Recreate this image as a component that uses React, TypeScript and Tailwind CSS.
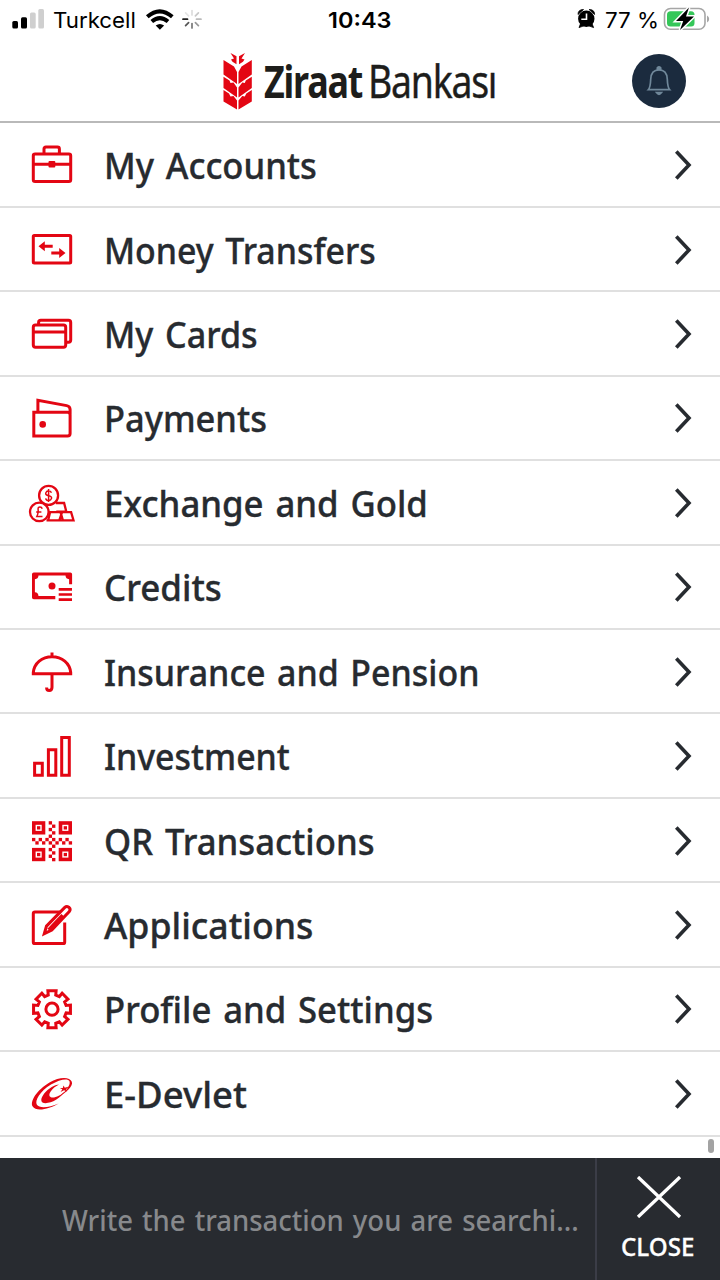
import { useLayoutEffect, useRef, useState, type ReactNode } from "react";

/** One line of text, condensed or widened to the given width. */
function FitText({ width, className, children }: { width: number; className?: string; children: string }) {
  const ref = useRef<HTMLSpanElement>(null);
  const [scale, setScale] = useState(1);
  useLayoutEffect(() => {
    if (ref.current) setScale(width / ref.current.offsetWidth);
  }, [width]);
  return (
    <span className="block shrink-0" style={{ width }}>
      <span
        ref={ref}
        className={"inline-block origin-left whitespace-nowrap " + (className ?? "")}
        style={{ transform: `scaleX(${scale})` }}
      >
        {children}
      </span>
    </span>
  );
}

const qrCells = [
  [5, 0], [6, 1], [5, 2], [6, 3], [5, 4],
  [0, 5], [1, 6], [2, 5], [3, 6], [4, 5], [5, 6], [6, 5], [7, 6], [8, 5], [9, 6], [10, 5], [11, 6],
  [6, 7], [5, 8], [6, 9], [5, 10], [6, 11],
];

const finders = [[4, 5.2], [30.7, 5.2], [4, 31.9], [30.7, 31.9]];

const gearPath = (() => {
  const pts: string[] = [];
  for (let i = 0; i < 8; i++) {
    const base = (i * Math.PI) / 4;
    const steps = [[-0.26, 14.6], [-0.22, 18.9], [0.22, 18.9], [0.26, 14.6]];
    for (const [da, r] of steps) {
      pts.push(`${(24 + r * Math.sin(base + da)).toFixed(2)} ${(25.2 - r * Math.cos(base + da)).toFixed(2)}`);
    }
  }
  return "M" + pts.join("L") + "Z";
})();

const items: { label: string; width: number; icon: ReactNode }[] = [
  {
    label: "My Accounts", width: 213,
    icon: (
      <>
        <rect x="5.3" y="14" width="37.4" height="27.5" rx="1.8" />
        <path d="M16 14V9q0-1.900 1.900-1.900h11.600q1.900 0 1.900 1.900v5M5.300 24.300h37.400" />
        <rect x="20.5" y="21" width="6.8" height="6.6" rx="1" fill="#e30613" stroke="none" />
      </>
    ),
  },
  {
    label: "Money Transfers", width: 272,
    icon: (
      <>
        <rect x="5.3" y="10.6" width="37.4" height="27.4" rx="1" />
        <path d="M15 21.300h9.700M23.300 28h9.700" />
        <path d="M10.500 21.300l6.300-5v10zM37.500 28l-6.300-5v10z" fill="#e30613" stroke="none" />
      </>
    ),
  },
  {
    label: "My Cards", width: 154,
    icon: (
      <>
        <rect x="5.3" y="16" width="32.4" height="22.3" rx="2.2" />
        <path d="M5.300 22.900h32.400M10.600 16v-2.600q0-2.200 2.200-2.200h27.700q2.200 0 2.200 2.200v17.700q0 2.200-2.200 2.200h-2.800" />
      </>
    ),
  },
  {
    label: "Payments", width: 163,
    icon: (
      <>
        <path d="M5.800 19.300h33.700q2.600 0 2.600 2.600v18.600q0 2.600-2.600 2.600H5.800zM9.900 19.300V7.200l28.800 5.400q3.400.7 3.400 4v5" />
        <circle cx="14.7" cy="31.4" r="3.3" fill="#e30613" stroke="none" />
      </>
    ),
  },
  {
    label: "Exchange and Gold", width: 324,
    icon: (
      <g strokeWidth="2.3">
        <path d="M27.800 25h8.300l2.200 8.600h-10M20.200 42.300l1.900-8.200h10.400l2.400 8.200H18.500M31.300 42.300l2.800-8.200h9l2.400 8.200H31" />
        <circle cx="20.6" cy="17.4" r="9.5" fill="white" />
        <circle cx="11.3" cy="33.9" r="9.3" fill="white" />
        <path d="M23.400 14.800q-.6-2-2.800-2t-2.800 2.100 2.800 2.800 2.900 2.700-2.900 2.200-2.900-2.200M20.600 11v13M14.200 30.800q-.5-1.800-2.200-1.800-2.100 0-1.900 2.300.4 4-1.300 7.200h5.700M8.200 34h5.200" strokeWidth="1.5" />
      </g>
    ),
  },
  {
    label: "Credits", width: 118,
    icon: (
      <>
        <path
          d="M5.800 10.500h36.500q1.800 0 1.800 1.800v10h-3V17.300q-3.400-.3-3.600-3.700H10.500q-.2 3.400-3.600 3.700v13q3.400.3 3.600 3.700h16.800v3.200H5.800Q4 37.200 4 35.400V12.300q0-1.800 1.800-1.800z"
          fill="#e30613" stroke="none"
        />
        <circle cx="24" cy="24" r="3.5" fill="#e30613" stroke="none" />
        <path d="M30.700 27.300H44M30.700 32.500H44M30.700 37.700H44" strokeWidth="2.7" />
      </>
    ),
  },
  {
    label: "Insurance and Pension", width: 375,
    icon: <path d="M5.300 26.700v-1.200C6.200 16 14 9.700 24 9.700s17.800 6.300 18.700 15.800v1.200zM24 5.400v4M24 26.700v13.500q0 3.300-2.800 3.300-2.600 0-2.600-3" />,
  },
  {
    label: "Investment", width: 186,
    icon: <path d="M6.600 32.300h7.700v12H6.600zM20.400 18.800h7.400v25.500h-7.400zM33.700 6.400h7.600v37.900h-7.600z" />,
  },
  {
    label: "QR Transactions", width: 271,
    icon: (
      <g fill="#e30613" stroke="none">
        {finders.map(([x, y]) => (
          <g key={`${x}-${y}`}>
            <rect x={x} y={y} width="13.3" height="13.3" />
            <rect x={x + 3.6} y={y + 3.6} width="6.1" height="6.1" fill="white" />
            <rect x={x + 5} y={y + 5} width="3.3" height="3.3" />
          </g>
        ))}
        {qrCells.map(([x, y], i) => (
          <rect key={i} x={4 + x * 3.34} y={5.2 + y * 3.34} width="3.34" height="3.34" />
        ))}
      </g>
    ),
  },
  {
    label: "Applications", width: 209,
    icon: (
      <>
        <path d="M33 12H7Q5.300 12 5.300 13.700v28.200q0 1.700 1.700 1.700h28q1.700 0 1.700-1.700V22.500" />
        <path d="M16.300 33.700l2.200-7.600L36.800 7.400q1.800-1.700 4-.2 2.300 2 .5 4.300L23.800 30zM20.500 29.700L34.500 15" />
      </>
    ),
  },
  {
    label: "Profile and Settings", width: 329,
    icon: (
      <>
        <path d={gearPath} />
        <circle cx="24" cy="25.2" r="6.1" />
      </>
    ),
  },
  {
    label: "E-Devlet", width: 143,
    icon: (
      <g fill="#e30613" stroke="none">
        <path d="M43.800 12.800C42 8 32 7.400 21.500 13.500 9 20.800 1.500 32.500 4.700 37.600c3.300 5.200 16.500 2.600 26-3.200-9.200 4.200-19.300 5.300-21.800 1.400C6.400 31.700 12.200 22 23 15.500 31.500 10.400 40 8.800 41.500 12.300c1.500 4.200-4.500 11-10.700 15.500 7.500-4.300 14.700-10.700 13-15z" />
        <path d="M31 15.500c-7 .2-17.500 9.500-17.700 15.700-.1 4.300 8.200 3.600 14.700-.4 4-2.500 7.200-5.600 8.300-8-3.400 3.600-10 6.800-13.400 5.500-4.400-2 1.200-9.500 8.100-12.800z" />
        <path d="M35.500 16.600l1.300 2.200 4.200-1.200-3 2.600 1.200 2.300-3.200-1.200-3.400 1.700 1.700-2.700-2.500-1.300h3z" />
      </g>
    ),
  },
];

function StatusBar() {
  return (
    <div className="flex h-10 items-center font-[Inter,sans-serif] text-[22px] leading-10 text-black">
      <svg className="ml-3 h-10 w-8" viewBox="12 0 32 40">
        <rect x="12.3" y="21" width="5.7" height="7.5" rx="1.5" />
        <rect x="21" y="17.3" width="6" height="11.2" rx="1.5" />
        <rect x="30" y="12.5" width="5.7" height="16" rx="1.5" fill="#cfcfcf" />
        <rect x="38.3" y="9" width="5.7" height="19.5" rx="1.5" fill="#cfcfcf" />
      </svg>
      <div className="ml-[9px] flex"><FitText width={83}>Turkcell</FitText></div>
      <svg className="ml-[9px] h-10 w-15" viewBox="145 0 60 40" fill="none">
        <g stroke="black" strokeWidth="4">
          <path d="M147.300 16.800q12.400-11 25 0" />
          <path d="M151.800 21.600q8-7 16.200 0" />
        </g>
        <path d="M155.700 25.500q4.200-3.200 8.400 0l-4.200 4.300z" fill="black" />
        <g strokeWidth="1.7" strokeLinecap="round">
          <path d="M192 10.500v4.500" stroke="#dddddd" />
          <path d="M198.400 12.800l-3 3" stroke="#c8c8c8" />
          <path d="M201 19.200h-4.500" stroke="#bbbbbb" />
          <path d="M198.400 25.600l-3-3" stroke="#999999" />
          <path d="M192 28v-4.500" stroke="#777777" />
          <path d="M185.600 25.600l3-3" stroke="#555555" />
          <path d="M183 19.200h4.500" stroke="#222222" />
          <path d="M185.600 12.800l3 3" stroke="#e5e5e5" />
        </g>
      </svg>
      <div className="ml-[123px] flex font-semibold"><FitText width={63}>10:43</FitText></div>
      <svg className="ml-[186px] h-10 w-5" viewBox="577 0 20 40">
        <circle cx="586.3" cy="18.8" r="8.2" />
        <path d="M578 14.500q0-5 5.500-5zM594.600 14.500q0-5-5.500-5zM579 27.600l2-5 3.500 3zM593.600 27.600l-2-5-3.500 3z" stroke="black" strokeWidth=".8" />
        <path d="M586.500 13.500v5.700h-5.200" fill="none" stroke="white" strokeWidth="1.6" />
      </svg>
      <div className="ml-2 flex"><FitText width={54}>77 %</FitText></div>
      <svg className="ml-[3px] h-10 w-12" viewBox="662 0 48 40">
        <rect x="664.5" y="8.5" width="40.5" height="20.8" rx="6" fill="none" stroke="#a6a6a6" strokeWidth="1.6" />
        <path d="M707 15.500q2.200 1 2.200 3.500t-2.200 3.500z" fill="#a6a6a6" />
        <rect x="667" y="11.2" width="27.5" height="15.4" rx="3.5" fill="#35c759" />
        <path d="M689 7.500L676 21h7.200l-3.200 9L694 16.500h-8z" stroke="white" strokeWidth="3" paintOrder="stroke" />
      </svg>
    </div>
  );
}

function Header() {
  return (
    <header className="flex h-[83px] items-start border-b-2 border-[#b9b9b9] pl-[223px] font-['Noto_Sans',sans-serif]">
      <svg className="mt-3 h-[58px] w-[30px] shrink-0" viewBox="0 0 30 58" fill="#e30613">
        <path d="M7.500 1l6 3.200v8L9.500 9.700 8 7.500l3-1zM22 1l-6 3.200v8l4-2.500 1.500-2.200-3-1z" />
        <path d="M.5 8l10.500 6.500L14 20v12L.5 22.500zM28.800 8L18.500 14.500 15.500 20v12l13.300-9.500z" />
        <path d="M.5 24.800l6 3.700 1 2.500 3-.5L14 35.500v10L.5 36zM28.800 24.800l-6 3.700-1 2.500-2.500-.5-3.800 5v10l13.300-9.500z" />
        <path d="M.5 38l5.500 3.500 1.500 3 3-.5L14 48.500v9L.5 49.500zM28.800 38l-5.500 3.500-1.500 3-2.500-.5-3.800 4.500v9l13.300-8z" />
      </svg>
      <div className="mt-[11px] ml-[11px] flex text-[45px] leading-[60px] tracking-[-1.5px] text-[#1d1d1b]">
        <FitText width={98} className="font-bold">Ziraat</FitText>
        <div className="ml-[6px] flex"><FitText width={128} className="[-webkit-text-stroke:0.4px_#1d1d1b]">Bankası</FitText></div>
      </div>
      <button className="mt-[14px] ml-[136px] flex size-[54px] shrink-0 items-center justify-center rounded-full bg-[#1b2b3e]" aria-label="Notifications">
        <svg className="size-[54px]" viewBox="0 0 54 54" fill="none" stroke="#70889a" strokeWidth="1.7">
          <path d="M16.300 35.700c1.800-2 2.200-5 2.400-10.500.3-6 3-9.300 8.300-9.300s8 3.300 8.300 9.300c.2 5.500.6 8.500 2.400 10.500z" />
          <path d="M25.300 15.500V13.800q1.700-1.600 3.400 0v1.700zM24.500 38.500h5q-2.500 3.600-5 0z" fill="#70889a" />
        </svg>
      </button>
    </header>
  );
}

export default function App() {
  return (
    <div className="flex h-[1280px] w-[720px] flex-col overflow-hidden bg-white">
      <StatusBar />
      <Header />
      <main className="flex min-h-0 flex-1">
        <ul className="flex w-full flex-col pt-[0.4px]">
          {items.map(({ label, width, icon }) => (
            <li key={label} className="flex h-[84.45px] shrink-0 items-center border-b-2 border-[#e0e0e0] pt-px pl-7">
              <svg className="mb-[2px] size-12 shrink-0" viewBox="0 0 48 48" fill="none" stroke="#e30613" strokeWidth="3">
                {icon}
              </svg>
              <div className="ml-[28px] flex flex-1 font-['Noto_Sans',sans-serif] text-[37px] leading-[50px] font-medium text-[#272b30] [-webkit-text-stroke:0.35px_#272b30] [word-spacing:3px]">
                <FitText width={width}>{label}</FitText>
              </div>
              <svg className="mr-[26px] h-8 w-5" viewBox="0 0 20 32" fill="none" stroke="#272b30" strokeWidth="3.6">
                <path d="M2.300 2.500L15 16 2.300 29.500" />
              </svg>
            </li>
          ))}
          <li className="flex justify-end pt-[2px] pr-[6px]">
            <span className="h-[14px] w-[6px] rounded-full bg-[#a3a3a3]" />
          </li>
        </ul>
      </main>
      <footer className="flex h-[122px] shrink-0 bg-[#282b30] font-['Noto_Sans',sans-serif]">
        <div className="flex w-[595px] items-center pt-[3px] pl-[62px] text-[28.5px] text-[#87898c] [word-spacing:2px]">
          <FitText width={517} className="font-medium">Write the transaction you are searchi...</FitText>
        </div>
        <button className="flex flex-1 flex-col items-center border-l-2 border-[#3b3d47] text-white">
          <svg className="mt-[18px] h-[42px] w-[46px]" viewBox="0 0 46 42" fill="none" stroke="white" strokeWidth="3.3">
            <path d="M2 1l42 40M44 1L2 41" />
          </svg>
          <div className="mt-3 mr-[2px] flex text-[24.5px] leading-[34px]">
            <FitText width={73} className="font-medium [-webkit-text-stroke:0.3px_white]">CLOSE</FitText>
          </div>
        </button>
      </footer>
    </div>
  );
}
